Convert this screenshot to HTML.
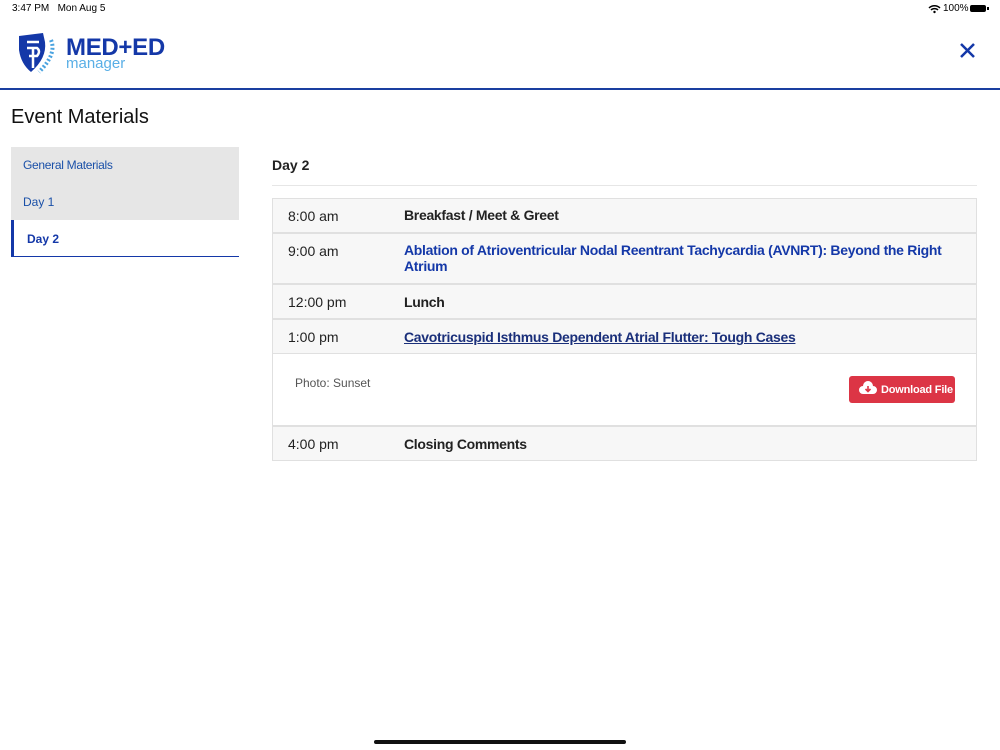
<!DOCTYPE html>
<html><head><style>
body{margin:0;width:1000px;height:750px;background:#fff;font-family:"Liberation Sans",sans-serif;position:relative;overflow:hidden;color:#222}
.abs{position:absolute}
.row{position:absolute;left:272px;width:705px;background:#f7f7f7;border:1px solid #e0e0e0;border-top:none;box-sizing:border-box}
.t{position:absolute;left:15px;font-size:14px;color:#222}
.d{position:absolute;left:131px;font-size:14px;font-weight:bold;color:#222;letter-spacing:-0.3px;width:560px;line-height:16px}
.blue{color:#1438a8}
</style></head><body>
<div class="abs" style="left:12px;top:3px;font-size:10px;color:#000">3:47 PM&nbsp;&nbsp;&nbsp;Mon Aug 5</div>
<div class="abs" style="left:943px;top:3px;font-size:10px;color:#000">100%</div>
<svg class="abs" style="left:928px;top:4px" width="13" height="10" viewBox="0 0 13 10"><path d="M1 4a8 8 0 0 1 11 0M3 6a5 5 0 0 1 7 0" stroke="#000" stroke-width="1.5" fill="none"/><circle cx="6.5" cy="8" r="1.2"/></svg>
<div class="abs" style="left:970px;top:5px;width:16px;height:7px;border:1px solid #000;border-radius:2px;background:#000;box-sizing:border-box"></div>
<div class="abs" style="left:987px;top:7px;width:1.5px;height:3px;background:#000"></div>
<svg class="abs" style="left:17px;top:32px" width="44" height="42" viewBox="0 0 44 42"><path d="M2 4 L26 1 L28 10 Q30 26 14 40 Q4 32 2 18 Z" fill="#1438a8"/><path d="M10 10 h12 M10 16 h10 q4 3 0 8 h-8 M16 16 v20" stroke="#fff" stroke-width="2.5" fill="none"/><path d="M34 8 q6 14 -12 32" stroke="#4aa3e0" stroke-width="4" fill="none" stroke-dasharray="2 2"/></svg>
<div class="abs" style="left:66px;top:34px;font-size:24px;font-weight:bold;color:#1438a8;letter-spacing:-0.3px">MED+ED</div>
<div class="abs" style="left:66px;top:55px;font-size:15px;color:#5aafe6">manager</div>
<svg class="abs" style="left:959px;top:42px" width="17" height="17" viewBox="0 0 17 17"><path d="M2 2L15 15M15 2L2 15" stroke="#1438a8" stroke-width="2.5"/></svg>
<div class="abs" style="left:0;top:88px;width:1000px;height:2px;background:#1a3fa0"></div>
<div class="abs" style="left:11px;top:106px;font-size:20px;color:#111">Event Materials</div>
<div class="abs" style="left:11px;top:147px;width:228px;height:73px;background:#e6e6e6"></div>
<div class="abs" style="left:23px;top:158px;font-size:12px;color:#1a50a8;letter-spacing:-0.3px">General Materials</div>
<div class="abs" style="left:23px;top:195px;font-size:12px;color:#1a50a8">Day 1</div>
<div class="abs" style="left:11px;top:220px;width:228px;height:37px;background:#fff;border-left:3px solid #1438a8;border-bottom:1px solid #1438a8;box-sizing:border-box"></div>
<div class="abs" style="left:27px;top:232px;font-size:12px;font-weight:bold;color:#1438a8">Day 2</div>
<div class="abs" style="left:272px;top:157px;font-size:14px;font-weight:bold;color:#222">Day 2</div>
<div class="abs" style="left:272px;top:185px;width:705px;height:1px;background:#e6e6e6"></div>
<div class="row" style="top:198px;height:35px;border-top:1px solid #e0e0e0"><span class="t" style="top:9px">8:00 am</span><span class="d" style="top:8px">Breakfast / Meet &amp; Greet</span></div>
<div class="row" style="top:233px;height:51px;border-top:1px solid #e0e0e0"><span class="t" style="top:9px">9:00 am</span><span class="d blue" style="top:8px">Ablation of Atrioventricular Nodal Reentrant Tachycardia (AVNRT): Beyond the Right Atrium</span></div>
<div class="row" style="top:284px;height:35px;border-top:1px solid #e0e0e0"><span class="t" style="top:9px">12:00 pm</span><span class="d" style="top:9px">Lunch</span></div>
<div class="row" style="top:319px;height:35px;border-top:1px solid #e0e0e0"><span class="t" style="top:9px">1:00 pm</span><span class="d" style="top:9px;text-decoration:underline;color:#1a2f7a">Cavotricuspid Isthmus Dependent Atrial Flutter: Tough Cases</span></div>
<div class="row" style="top:354px;height:72px;background:#fff"><span style="position:absolute;left:22px;top:22px;font-size:12px;color:#555">Photo: Sunset</span>
<div style="position:absolute;left:576px;top:22px;width:106px;height:27px;background:#dc3545;border-radius:3px;color:#fff;font-size:11px;font-weight:bold;white-space:nowrap"><svg style="position:absolute;left:9px;top:5px" width="20" height="14" viewBox="0 0 20 14"><path d="M5 13a4 4 0 0 1 0-8a5 5 0 0 1 10 0a4 4 0 0 1 0 8z" fill="#fff"/><path d="M10 5v5M7.5 8l2.5 2.5 2.5-2.5" stroke="#dc3545" stroke-width="1.6" fill="none"/></svg><span style="position:absolute;left:32px;top:8px;letter-spacing:-0.2px">Download File</span></div></div>
<div class="row" style="top:426px;height:35px;border-top:1px solid #e0e0e0"><span class="t" style="top:9px">4:00 pm</span><span class="d" style="top:9px">Closing Comments</span></div>
<div class="abs" style="left:374px;top:740px;width:252px;height:4px;border-radius:2px;background:#111"></div>
</body></html>
